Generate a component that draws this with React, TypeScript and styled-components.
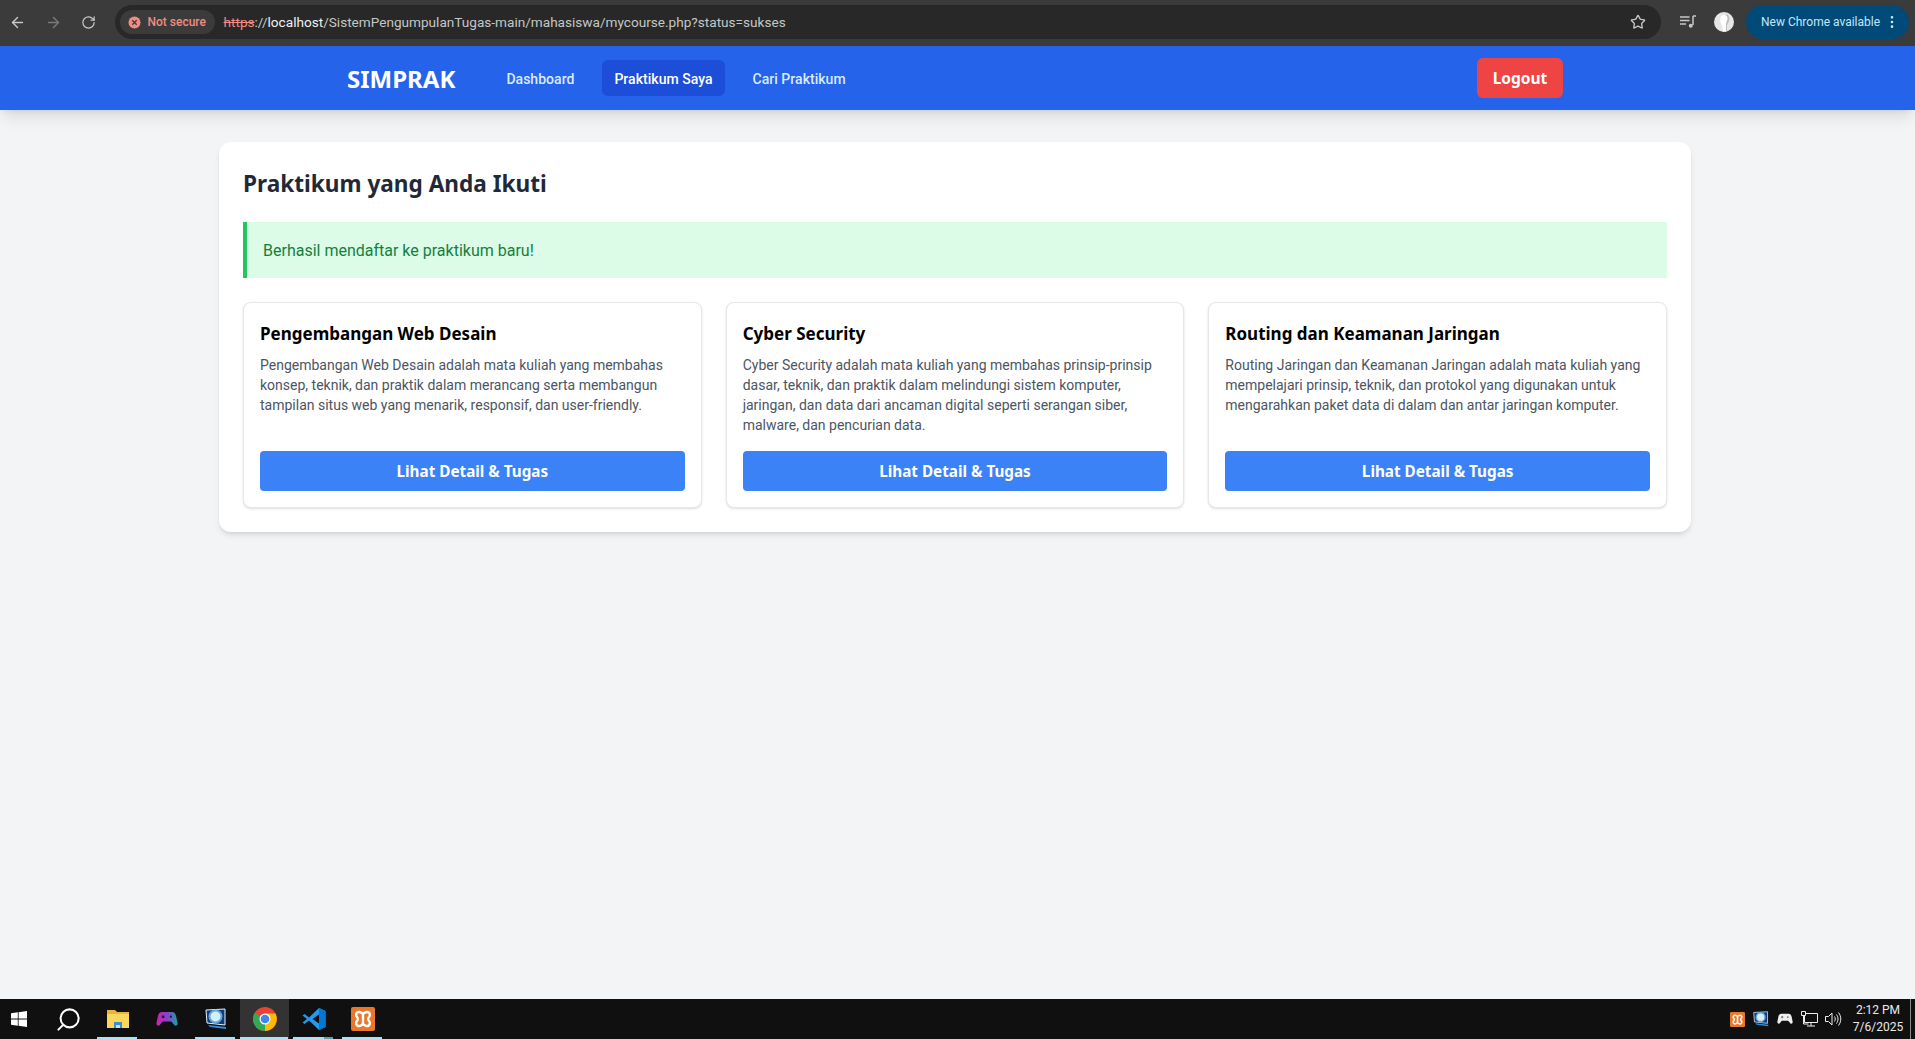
import React from "react";
import styled, { createGlobalStyle } from "styled-components";
import { ArrowLeft, ArrowRight, RotateCw, Star, EllipsisVertical, Search } from "lucide-react";

const GlobalStyle = createGlobalStyle`
  html, body { margin: 0; padding: 0; height: 100%; }
  body {
    background: #f3f4f6;
    font-family: Roboto, "Noto Sans", "Liberation Sans", sans-serif;
    overflow: hidden;
  }
  * { box-sizing: border-box; }
`;

const headingFont = `"Noto Sans", Roboto, "Liberation Sans", sans-serif`;

const Screen = styled.div`
  width: 1915px;
  height: 1039px;
  display: flex;
  flex-direction: column;
`;

/* browser chrome */
const BrowserBar = styled.div`
  height: 46px;
  flex: none;
  background: #3b3b3b;
  display: flex;
  align-items: center;
  padding: 0 6px 2px 0;
  color: #c7c7c7;
`;

const NavIcon = styled.span<{ $dim?: boolean }>`
  width: 35.5px;
  display: flex;
  justify-content: center;
  color: ${(p) => (p.$dim ? "#7a7a7a" : "#c7c7c7")};
`;

const Omnibox = styled.div`
  flex: 1;
  height: 34px;
  margin-left: 8px;
  border-radius: 17px;
  background: #282828;
  display: flex;
  align-items: center;
  padding: 0 15px 0 5px;
`;

const SecureChip = styled.div`
  width: 95px;
  height: 24px;
  flex: none;
  border-radius: 12px;
  background: #3b3b3b;
  color: #f28b82;
  font-size: 12px;
  font-weight: 500;
  display: flex;
  align-items: center;
  gap: 7px;
  padding-left: 8px;
  margin-right: 9px;
`;

const Url = styled.div`
  flex: 1;
  font-size: 13.6px;
  color: #c4c7c5;
  white-space: nowrap;
`;

const UrlStrike = styled.span`
  color: #f28b82;
  text-decoration: line-through;
`;

const UrlHost = styled.span`
  color: #f1f1f1;
`;

const ToolSlot = styled.div`
  margin-left: 19px;
  display: flex;
  align-items: center;
`;

const UpdatePill = styled.div`
  width: 163px;
  height: 34px;
  flex: none;
  margin-left: 12px;
  border-radius: 17px;
  background: #004a77;
  color: #c2e7ff;
  font-size: 12px;
  display: flex;
  align-items: center;
  justify-content: space-between;
  padding: 0 9px 0 15px;
`;

/* app nav */
const TopNav = styled.nav`
  height: 64px;
  flex: none;
  background: #2563eb;
  box-shadow: 0 10px 15px -3px rgba(0, 0, 0, 0.1), 0 4px 6px -4px rgba(0, 0, 0, 0.1);
  position: relative;
  padding-right: 5px;
`;

const NavInner = styled.div`
  max-width: 1280px;
  height: 100%;
  margin: 0 auto;
  padding: 0 32px;
  display: flex;
  align-items: center;
  justify-content: space-between;
`;

const NavLeft = styled.div`
  display: flex;
  align-items: center;
`;

const Brand = styled.div`
  color: #fff;
  font-family: ${headingFont};
  font-size: 24px;
  font-weight: 700;
  margin-right: 39px;
`;

const NavLink = styled.a<{ $active?: boolean }>`
  font-size: 14px;
  font-weight: 500;
  line-height: 20px;
  letter-spacing: 0.03px;
  color: ${(p) => (p.$active ? "#fff" : "#dbeafe")};
  background: ${(p) => (p.$active ? "#1d4ed8" : "transparent")};
  padding: 9px 12px 7px;
  height: 36px;
  border-radius: 6px;
  margin-right: 16px;
`;

const LogoutButton = styled.button`
  height: 40px;
  width: 86px;
  border: 0;
  border-radius: 6px;
  background: #ef4444;
  color: #fff;
  font-family: ${headingFont};
  font-size: 15.5px;
  font-weight: 700;
`;

/* content */
const Main = styled.main`
  flex: 1;
  padding: 32px 224px 0 219px;
`;

const Panel = styled.section`
  background: #fff;
  border-radius: 12px;
  box-shadow: 0 4px 6px -1px rgba(0, 0, 0, 0.1), 0 2px 4px -2px rgba(0, 0, 0, 0.1);
  padding: 24px;
`;

const Title = styled.h1`
  margin: 0 0 20px;
  font-family: ${headingFont};
  font-size: 22.6px;
  line-height: 36px;
  font-weight: 700;
  color: #1f2937;
`;

const Alert = styled.div`
  background: #dcfce7;
  border-left: 4px solid #22c55e;
  color: #15803d;
  font-size: 16px;
  line-height: 24px;
  padding: 17px 16px 15px;
  margin-bottom: 24px;
`;

const CardGrid = styled.div`
  display: grid;
  grid-template-columns: repeat(3, 1fr);
  gap: 24px;
`;

const Card = styled.article`
  background: #fff;
  border: 1px solid #e5e7eb;
  border-radius: 8px;
  box-shadow: 0 1px 3px 0 rgba(0, 0, 0, 0.1), 0 1px 2px -1px rgba(0, 0, 0, 0.1);
  padding: 16px;
  display: flex;
  flex-direction: column;
`;

const CardTitle = styled.h2`
  margin: 0 0 6px;
  font-family: ${headingFont};
  font-size: 17px;
  line-height: 30px;
  font-weight: 700;
  color: #000;
`;

const CardText = styled.p`
  margin: 0 0 16px;
  flex: 1;
  font-size: 14px;
  line-height: 20px;
  color: #4b5563;
`;

const DetailButton = styled.a`
  display: block;
  height: 40px;
  line-height: 40px;
  text-align: center;
  border-radius: 4px;
  background: #3b82f6;
  color: #fff;
  font-family: ${headingFont};
  font-size: 15.25px;
  font-weight: 700;
`;

/* windows taskbar */
const Taskbar = styled.footer`
  height: 40px;
  flex: none;
  background: #101010;
  display: flex;
  align-items: stretch;
  color: #fff;
`;

const StartSlot = styled.div`
  width: 38px;
  margin-right: 6px;
  display: flex;
  align-items: center;
  justify-content: center;
`;

const TaskSlot = styled.div<{ $open?: boolean; $active?: boolean; $stacked?: boolean }>`
  width: 49px;
  position: relative;
  display: flex;
  align-items: center;
  justify-content: center;
  background: ${(p) => (p.$active ? "#333" : "transparent")};
  ${(p) =>
    p.$open
      ? `&::after {
    content: "";
    position: absolute;
    left: ${p.$active ? 0 : 4}px;
    right: ${p.$active ? 1 : 5}px;
    bottom: 0;
    height: 2px;
    background: ${p.$stacked ? "linear-gradient(to right, #a5e3f5 77%, #5e9fb0 77%)" : "#a5e3f5"};
  }`
      : ""}
`;

const Tray = styled.div`
  margin-left: auto;
  display: flex;
  align-items: center;
`;

const TrayIcon = styled.div`
  width: 24px;
  display: flex;
  justify-content: center;
`;

const Clock = styled.div`
  font-size: 12px;
  line-height: 17px;
  text-align: center;
  color: #e8e8e8;
  margin-left: 6px;
  width: 54px;
`;

const ShowDesktop = styled.div`
  align-self: stretch;
  width: 5px;
  margin-left: 5px;
  border-left: 1px solid #8a8a8a;
`;

const ProfileAvatar = () => (
  <svg width="20" height="20" viewBox="0 0 20 20" style={{ marginLeft: 18 }}>
    <circle cx="10" cy="10" r="10" fill="#e6e6e6" />
    <path d="M12 2c3 1 4 4 3 7-.6 2-2 3-2 5v5.5c-1 .4-2 .5-3 .5-.5-3 .2-6 1-8 .7-2 1.5-6 1-10z" fill="#bdbdbd" />
    <path d="M6.5 6.5a3.5 3.5 0 0 1 7 0c0 2-1.5 3.5-1.5 6v7H8.5c.5-3-.2-5-1-7a8 8 0 0 1-1-6z" fill="#fff" />
  </svg>
);

const QueueIcon = () => (
  <svg width="16" height="14" viewBox="0 0 16 14" fill="none" stroke="#c7c7c7" strokeWidth="1.5">
    <path d="M0 2h9.5M0 5.5h9.5M0 9h6" />
    <path d="M13 1v9" />
    <path d="M13 1h3" />
    <circle cx="10.8" cy="10.8" r="2" fill="#c7c7c7" stroke="none" />
  </svg>
);

const WinLogo = () => (
  <svg width="16" height="16" viewBox="0 0 16 16" fill="#fff">
    <path d="M0 2.3 6.8 1.3V7.6H0zM7.6 1.2 16 0V7.6H7.6zM0 8.4H6.8V14.7L0 13.7zM7.6 8.4H16V16L7.6 14.8z" />
  </svg>
);

const FolderIcon = () => (
  <svg width="22" height="20" viewBox="0 0 22 20">
    <path d="M0 1h8l2 2h12v16H0z" fill="#e8b33f" />
    <path d="M0 5h22v14H0z" fill="#fbd75b" />
    <path d="M7 13h8v6H7z" fill="#3f8fd2" />
    <path d="M9 16h4v3H9z" fill="#bfe3f7" />
  </svg>
);

const GamepadIcon = ({ size = 22, mono = false }: { size?: number; mono?: boolean }) => (
  <svg width={size} height={size * 0.7} viewBox="0 0 22 16">
    <defs>
      <linearGradient id="pad" x1="0" x2="1">
        <stop offset="0" stopColor="#d21fb0" />
        <stop offset="0.5" stopColor="#8a3fd0" />
        <stop offset="1" stopColor="#15a5a5" />
      </linearGradient>
    </defs>
    <path
      d="M6 1h10c2.5 0 3.8 1.5 4.5 4.5L22 13c.2 2-2.2 3-3.5 1.5L15.5 11h-9l-3 3.5C2.2 16 0 15 0 13L1.5 5.5C2.2 2.5 3.5 1 6 1z"
      fill={mono ? "#eee" : "url(#pad)"}
    />
    <circle cx="7" cy="6" r="1.6" fill={mono ? "#777" : "#222"} />
    <circle cx="15" cy="6" r="1.2" fill={mono ? "#777" : "#222"} />
  </svg>
);

const MonitorAppIcon = ({ size = 22 }: { size?: number }) => (
  <svg width={size} height={size} viewBox="0 0 22 22">
    <path d="M1 2 20 1v16L2 15z" fill="#123a7a" stroke="#e8f3fa" strokeWidth="1" />
    <circle cx="10.5" cy="8.5" r="6" fill="#d7ecf7" stroke="#5fa8dc" strokeWidth="2" />
    <path d="M3 17 21 19v2L5 19z" fill="#2f8fe0" />
  </svg>
);

const ChromeIcon = () => (
  <svg width="24" height="24" viewBox="0 0 24 24">
    <circle cx="12" cy="12" r="12" fill="#ea4335" />
    <path d="M12 12 1.6 6A12 12 0 0 0 12 24z" fill="#34a853" />
    <path d="M12 6.5h10.4A12 12 0 0 1 12 24L12 12z" fill="#fbbc05" />
    <circle cx="12" cy="12" r="5.5" fill="#fff" />
    <circle cx="12" cy="12" r="4.3" fill="#4285f4" />
  </svg>
);

const VsCodeIcon = () => (
  <svg width="24" height="24" viewBox="0 0 24 24">
    <path d="M17 1 23.5 4v16L17 23 7 13.5 2.5 17 .5 15.5 5 12 .5 8.5 2.5 7 7 10.5z" fill="#1f9cf0" />
    <path d="M17 7.5 10.5 12l6.5 4.5z" fill="#101010" />
    <path d="M17 1 23.5 4v16L17 23z" fill="#0078d4" />
  </svg>
);

const XamppIcon = ({ size = 24 }: { size?: number }) => (
  <svg width={size} height={size} viewBox="0 0 24 24">
    <rect width="24" height="24" rx="2" fill="#e8782b" />
    <path
      d="M8 5c2 0 2.5 1.5 4 1.5S14 5 16 5c3 0 3.5 3.5 2 5-1 1-1 3 0 4 1.5 1.5 1 5-2 5-2 0-2.5-1.5-4-1.5S10 19 8 19c-3 0-3.5-3.5-2-5 1-1 1-3 0-4C4.5 8.5 5 5 8 5z"
      fill="none"
      stroke="#fff"
      strokeWidth="2.4"
    />
    <path d="M12 6.5v11" stroke="#fff" strokeWidth="2.4" />
  </svg>
);

const NetworkIcon = () => (
  <svg width="17" height="16" viewBox="0 0 17 16" fill="none" stroke="#eee" strokeWidth="1">
    <path d="M3.5 2.5h13v9h-13zM10 11.5V15M6 15h8" />
    <path d="M.5.5h4v4h-4z" fill="#101010" />
    <path d="M2.5 4.5v8.5h5" />
  </svg>
);

const VolumeIcon = () => (
  <svg width="17" height="16" viewBox="0 0 17 16" fill="none" stroke="#eee" strokeWidth="1">
    <path d="M.5 5.5h3l3.5-3.5v12L3.5 10.5h-3z" />
    <path d="M9.5 5.5c1 1.5 1 3.5 0 5M11.5 3.5c2 3 2 6 0 9M13.5 1.5c3 4 3 9 0 13" />
  </svg>
);

const courses = [
  {
    name: "Pengembangan Web Desain",
    text: "Pengembangan Web Desain adalah mata kuliah yang membahas konsep, teknik, dan praktik dalam merancang serta membangun tampilan situs web yang menarik, responsif, dan user-friendly.",
  },
  {
    name: "Cyber Security",
    text: "Cyber Security adalah mata kuliah yang membahas prinsip-prinsip dasar, teknik, dan praktik dalam melindungi sistem komputer, jaringan, dan data dari ancaman digital seperti serangan siber, malware, dan pencurian data.",
  },
  {
    name: "Routing dan Keamanan Jaringan",
    text: "Routing Jaringan dan Keamanan Jaringan adalah mata kuliah yang mempelajari prinsip, teknik, dan protokol yang digunakan untuk mengarahkan paket data di dalam dan antar jaringan komputer.",
  },
];

const App = () => (
  <Screen>
    <GlobalStyle />
    <BrowserBar>
      <NavIcon><ArrowLeft size={17} /></NavIcon>
      <NavIcon $dim><ArrowRight size={17} /></NavIcon>
      <NavIcon><RotateCw size={15} /></NavIcon>
      <Omnibox>
        <SecureChip>
          <svg width="13" height="13" viewBox="0 0 13 13">
            <circle cx="6.5" cy="6.5" r="6" fill="#f28b82" />
            <path d="M4.3 4.3l4.4 4.4M8.7 4.3 4.3 8.7" stroke="#3b3b3b" strokeWidth="1.3" />
          </svg>
          Not secure
        </SecureChip>
        <Url>
          <UrlStrike>https</UrlStrike>://<UrlHost>localhost</UrlHost>/SistemPengumpulanTugas-main/mahasiswa/mycourse.php?status=sukses
        </Url>
        <Star size={16} />
      </Omnibox>
      <ToolSlot><QueueIcon /></ToolSlot>
      <ProfileAvatar />
      <UpdatePill>
        New Chrome available
        <EllipsisVertical size={16} />
      </UpdatePill>
    </BrowserBar>

    <TopNav>
      <NavInner>
        <NavLeft>
          <Brand>SIMPRAK</Brand>
          <NavLink>Dashboard</NavLink>
          <NavLink $active>Praktikum Saya</NavLink>
          <NavLink>Cari Praktikum</NavLink>
        </NavLeft>
        <LogoutButton>Logout</LogoutButton>
      </NavInner>
    </TopNav>

    <Main>
      <Panel>
        <Title>Praktikum yang Anda Ikuti</Title>
        <Alert>Berhasil mendaftar ke praktikum baru!</Alert>
        <CardGrid>
          {courses.map((c) => (
            <Card key={c.name}>
              <CardTitle>{c.name}</CardTitle>
              <CardText>{c.text}</CardText>
              <DetailButton>Lihat Detail &amp; Tugas</DetailButton>
            </Card>
          ))}
        </CardGrid>
      </Panel>
    </Main>

    <Taskbar>
      <StartSlot><WinLogo /></StartSlot>
      <TaskSlot><Search size={27} strokeWidth={1.8} style={{ transform: "scaleX(-1)" }} /></TaskSlot>
      <TaskSlot $open><FolderIcon /></TaskSlot>
      <TaskSlot><GamepadIcon /></TaskSlot>
      <TaskSlot $open><MonitorAppIcon /></TaskSlot>
      <TaskSlot $open $active><ChromeIcon /></TaskSlot>
      <TaskSlot $open $stacked><VsCodeIcon /></TaskSlot>
      <TaskSlot $open><XamppIcon /></TaskSlot>
      <Tray>
        <TrayIcon><XamppIcon size={15} /></TrayIcon>
        <TrayIcon><MonitorAppIcon size={16} /></TrayIcon>
        <TrayIcon><GamepadIcon size={16} mono /></TrayIcon>
        <TrayIcon><NetworkIcon /></TrayIcon>
        <TrayIcon><VolumeIcon /></TrayIcon>
        <Clock>2:12 PM<br />7/6/2025</Clock>
        <ShowDesktop />
      </Tray>
    </Taskbar>
  </Screen>
);

export default App;
